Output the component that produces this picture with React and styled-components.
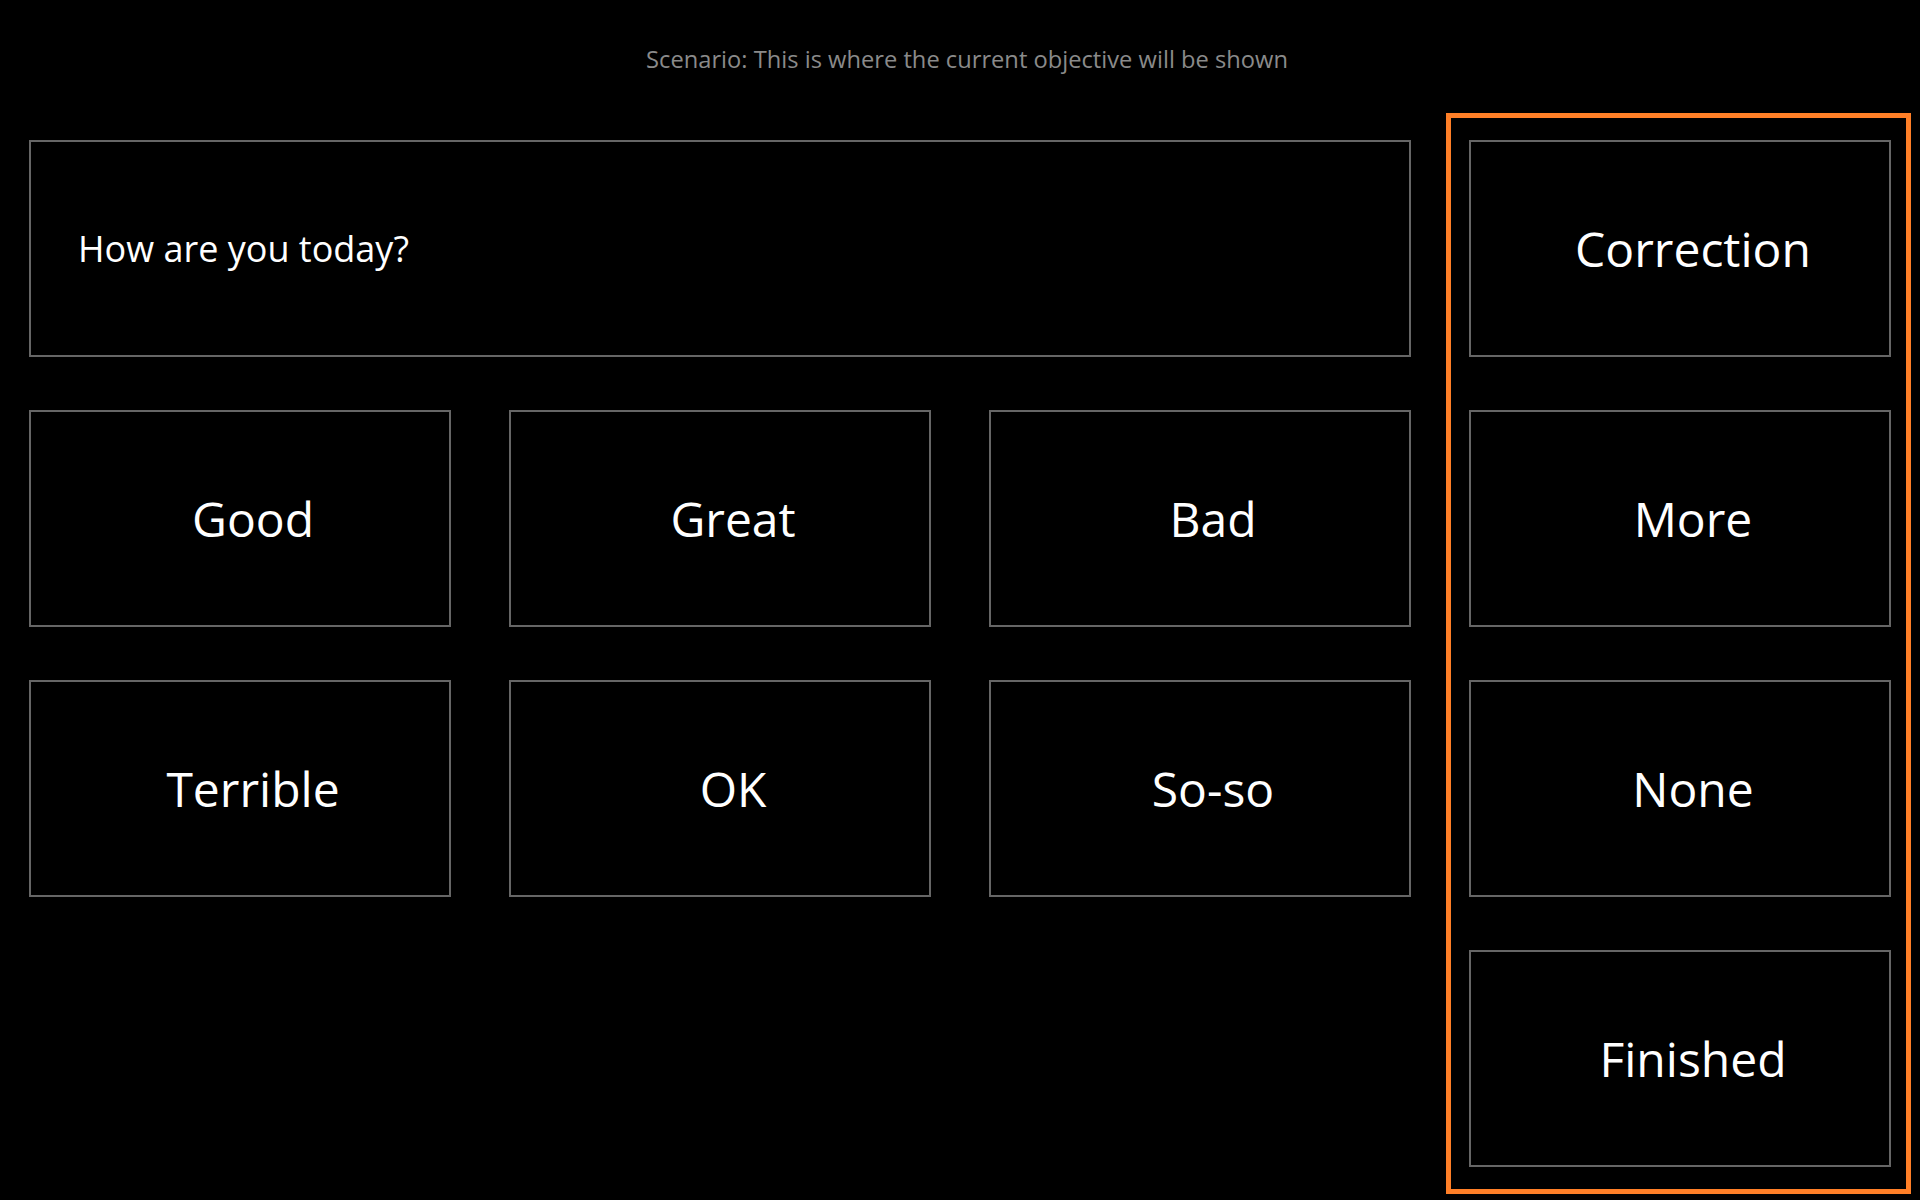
import React from "react";
import styled, { createGlobalStyle } from "styled-components";

const Global = createGlobalStyle`
  html, body {
    margin: 0;
    padding: 0;
    background: #000;
  }
  * { box-sizing: border-box; }
`;

const Page = styled.div`
  width: 1920px;
  height: 1200px;
  background: #000;
  font-family: "Open Sans", "Noto Sans", sans-serif;
  font-weight: 400;
  color: #fff;
  overflow: hidden;
`;

const Header = styled.header`
  height: 113px;
  padding: 43px 0 0 14px;
  text-align: center;
  font-size: 23.7px;
  line-height: 33px;
  color: #8a8a8a;
`;

const Main = styled.main`
  display: flex;
  gap: 35px;
  padding: 0 0 0 29px;
`;

const LeftArea = styled.section`
  width: 1382px;
  padding-top: 27px;
  display: flex;
  flex-direction: column;
  gap: 53px;
`;

const Tile = styled.div`
  height: 217px;
  border: 2px solid #666;
  background: #000;
  display: flex;
  align-items: center;
  justify-content: ${(p) => (p.$question ? "flex-start" : "center")};
  padding: ${(p) => (p.$question ? "0 0 0 47px" : "0 0 0 26px")};
  font-size: ${(p) => (p.$question ? "36px" : "48px")};
  line-height: normal;
  color: #fff;
`;

const AnswerGrid = styled.div`
  display: grid;
  grid-template-columns: repeat(3, 422px);
  column-gap: 58px;
  row-gap: 53px;
`;

const ActionPanel = styled.aside`
  width: 465px;
  height: 1081px;
  border: 5px solid #ff7f27;
  padding: 22px 15px 22px 18px;
  display: flex;
  flex-direction: column;
  gap: 53px;
`;

const answers = ["Good", "Great", "Bad", "Terrible", "OK", "So-so"];
const actions = ["Correction", "More", "None", "Finished"];

export default function App() {
  return (
    <Page>
      <Global />
      <Header>Scenario: This is where the current objective will be shown</Header>
      <Main>
        <LeftArea>
          <Tile $question>How are you today?</Tile>
          <AnswerGrid>
            {answers.map((a) => (
              <Tile key={a}>{a}</Tile>
            ))}
          </AnswerGrid>
        </LeftArea>
        <ActionPanel>
          {actions.map((a) => (
            <Tile key={a}>{a}</Tile>
          ))}
        </ActionPanel>
      </Main>
    </Page>
  );
}
